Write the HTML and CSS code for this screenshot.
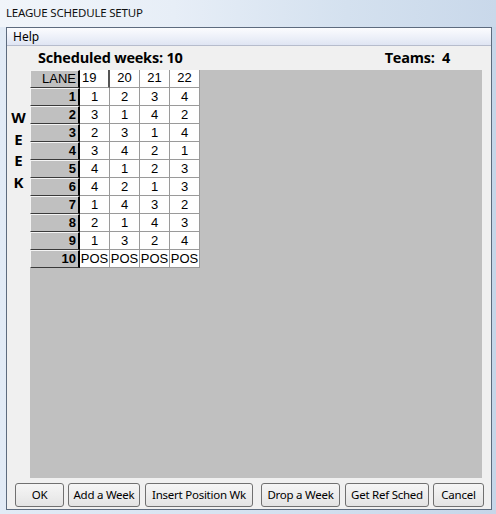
FILE: index.html
```html
<!DOCTYPE html>
<html>
<head>
<meta charset="utf-8">
<title>League Schedule Setup</title>
<link rel="stylesheet" href="styles.css">
</head>
<body>
<div class="frame">
  <div class="titlebar">LEAGUE SCHEDULE SETUP</div>
  <div class="window">
    <div class="menubar"><span class="menu-item">Help</span></div>
    <div class="client">
      <div class="info">
        <span class="weeks">Scheduled weeks: 10</span>
        <span class="teams">Teams:&nbsp; 4</span>
      </div>
      <div class="main">
        <div class="week-label"><span>W</span><span>E</span><span>E</span><span>K</span></div>
        <div class="workspace">
          <div class="grid">
            <div class="fix hdr-fix">LANE</div><div class="cell hdr edit">19</div><div class="cell hdr">20</div><div class="cell hdr">21</div><div class="cell hdr">22</div>
            <div class="fix">1</div><div class="cell">1</div><div class="cell">2</div><div class="cell">3</div><div class="cell">4</div>
            <div class="fix">2</div><div class="cell">3</div><div class="cell">1</div><div class="cell">4</div><div class="cell">2</div>
            <div class="fix">3</div><div class="cell">2</div><div class="cell">3</div><div class="cell">1</div><div class="cell">4</div>
            <div class="fix">4</div><div class="cell">3</div><div class="cell">4</div><div class="cell">2</div><div class="cell">1</div>
            <div class="fix">5</div><div class="cell">4</div><div class="cell">1</div><div class="cell">2</div><div class="cell">3</div>
            <div class="fix">6</div><div class="cell">4</div><div class="cell">2</div><div class="cell">1</div><div class="cell">3</div>
            <div class="fix">7</div><div class="cell">1</div><div class="cell">4</div><div class="cell">3</div><div class="cell">2</div>
            <div class="fix">8</div><div class="cell">2</div><div class="cell">1</div><div class="cell">4</div><div class="cell">3</div>
            <div class="fix">9</div><div class="cell">1</div><div class="cell">3</div><div class="cell">2</div><div class="cell">4</div>
            <div class="fix">10</div><div class="cell">POS</div><div class="cell">POS</div><div class="cell">POS</div><div class="cell">POS</div>
          </div>
        </div>
      </div>
      <div class="buttons">
        <button class="btn btn-ok">OK</button>
        <button class="btn btn-add">Add a Week</button>
        <button class="btn btn-insert">Insert Position Wk</button>
        <button class="btn btn-drop">Drop a Week</button>
        <button class="btn btn-ref">Get Ref Sched</button>
        <button class="btn btn-cancel">Cancel</button>
      </div>
    </div>
  </div>
</div>
</body>
</html>
```

FILE: styles.css
```css
* { box-sizing: border-box; }
html, body { margin: 0; padding: 0; }
body {
  width: 496px;
  height: 514px;
  overflow: hidden;
  background: linear-gradient(90deg, #e2ebf6 0%, #d3e0ef 60%, #c6d6e9 100%);
  font-family: "Noto Sans", "Open Sans", sans-serif;
  color: #000;
}
.frame {
  display: flex;
  flex-direction: column;
  height: 514px;
}
.titlebar {
  height: 27px;
  padding: 4px 0 0 6px;
  font-size: 11.5px;
  letter-spacing: -0.2px;
  line-height: 17px;
  color: #111;
  background: linear-gradient(90deg, #f1f5fa 0%, #e7eef7 35%, #d4e1ef 70%, #c9d8ea 100%);
}
.window {
  flex: 1;
  margin: 0 4px 4px 6px;
  border: 1px solid #5d6b7e;
  display: flex;
  flex-direction: column;
  background: #f0f0f0;
}
.menubar {
  height: 18px;
  padding-left: 6px;
  font-size: 12px;
  line-height: 17px;
  background: linear-gradient(#fbfcfe 0%, #eef1f9 50%, #dfe5f3 100%);
  border-bottom: 1px solid #b6bccc;
}
.client {
  flex: 1;
  display: flex;
  flex-direction: column;
}
.info {
  height: 24px;
  display: flex;
  justify-content: space-between;
  padding: 2px 41px 0 31px;
  font-family: "Open Sans", "Noto Sans", sans-serif;
  font-weight: bold;
  font-size: 14.5px;
  letter-spacing: -0.2px;
  line-height: 20px;
}
.main {
  height: 408px;
  display: flex;
}
.week-label {
  width: 23px;
  display: flex;
  flex-direction: column;
  align-items: center;
  padding-top: 37px;
  font-family: "Open Sans", "Noto Sans", sans-serif;
  font-weight: bold;
  font-size: 15px;
  line-height: 21.5px;
}
.workspace {
  width: 452px;
  background: #c0c0c0;
}
.grid {
  display: grid;
  grid-template-columns: 50px repeat(4, 30px);
  grid-auto-rows: 18px;
  width: 170px;
  font-family: "Liberation Sans", Arial, sans-serif;
  font-size: 13px;
  line-height: 16px;
}
.fix {
  background: #c0c0c0;
  border-top: 1px solid #f4f4f4;
  border-left: 1px solid #f4f4f4;
  border-bottom: 1px solid #3a3a3a;
  border-right: 2px solid #000;
  text-align: right;
  padding-right: 2px;
  font-weight: bold;
}
.hdr-fix { font-weight: normal; }
.cell {
  background: #fff;
  border-right: 1px solid #9a9a9a;
  border-bottom: 1px solid #9a9a9a;
  text-align: center;
  padding-top: 1px;
  white-space: nowrap;
  overflow: hidden;
}
.hdr { padding-top: 0; }
.edit {
  text-align: left;
  padding-left: 2px;
  border-right: 2px solid #555;
}
.buttons {
  margin-top: 5px;
  height: 24px;
  display: flex;
  padding-left: 8px;
}
.btn {
  height: 24px;
  margin: 0;
  padding: 0;
  border: 1px solid #707070;
  border-radius: 3px;
  background: linear-gradient(#f5f5f5 0%, #ededed 50%, #e3e3e3 100%);
  font-family: "Noto Sans", "Open Sans", sans-serif;
  font-size: 11.5px;
  letter-spacing: -0.25px;
  line-height: 20px;
  color: #000;
}
.btn-ok { width: 49px; }
.btn-add { width: 72px; margin-left: 4px; }
.btn-insert { width: 108px; margin-left: 5px; }
.btn-drop { width: 79px; margin-left: 8px; }
.btn-ref { width: 84px; margin-left: 5px; }
.btn-cancel { width: 51px; margin-left: 4px; }
```
